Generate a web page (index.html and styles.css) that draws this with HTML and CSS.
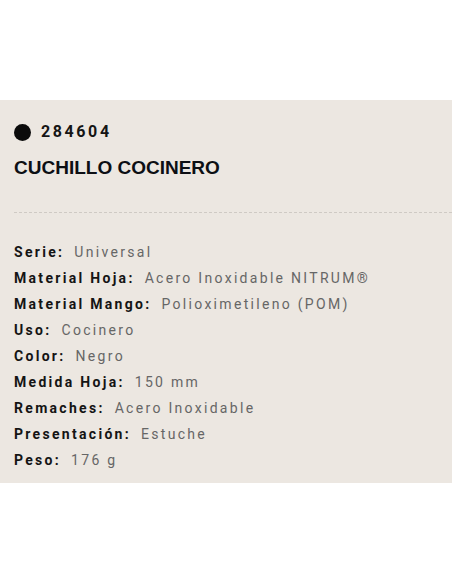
FILE: index.html
```html
<!DOCTYPE html>
<html lang="es">
<head>
<meta charset="utf-8">
<title>Cuchillo Cocinero</title>
<link rel="stylesheet" href="styles.css">
</head>
<body>
<section class="panel">
  <div class="ref"><span class="dot"></span><span class="code">284604</span></div>
  <h1 class="title">CUCHILLO COCINERO</h1>
  <hr class="sep">
  <ul class="specs">
    <li><b>Serie:</b><span>Universal</span></li>
    <li><b>Material Hoja:</b><span>Acero Inoxidable NITRUM®</span></li>
    <li><b>Material Mango:</b><span>Polioximetileno (POM)</span></li>
    <li><b>Uso:</b><span>Cocinero</span></li>
    <li><b>Color:</b><span>Negro</span></li>
    <li><b>Medida Hoja:</b><span>150 mm</span></li>
    <li><b>Remaches:</b><span>Acero Inoxidable</span></li>
    <li><b>Presentación:</b><span>Estuche</span></li>
    <li><b>Peso:</b><span>176 g</span></li>
  </ul>
</section>
</body>
</html>
```
FILE: styles.css
```css
html, body {
  margin: 0;
  padding: 0;
  background: #ffffff;
}
body {
  font-family: Roboto, "Liberation Sans", Arial, sans-serif;
  color: #111;
}
.panel {
  margin-top: 100px;
  height: 383px;
  box-sizing: border-box;
  background: #ece7e1;
  padding: 24px 0 0 14px;
}
.ref {
  display: flex;
  align-items: center;
  gap: 10px;
  height: 16px;
}
.dot {
  width: 17px;
  height: 17px;
  border-radius: 50%;
  background: #0b0b0b;
}
.code {
  font-size: 16px;
  font-weight: 700;
  letter-spacing: 2.6px;
  color: #151515;
  line-height: 16px;
}
.title {
  margin: 17px 0 0;
  font-family: "Liberation Sans", Arial, sans-serif;
  font-size: 19px;
  font-weight: 700;
  line-height: 22px;
  color: #0d0f14;
}
.sep {
  margin: 33px 0 0;
  border: 0;
  border-top: 1px dashed #cfcac4;
  height: 0;
}
.specs {
  list-style: none;
  margin: 26px 0 0;
  padding: 0;
}
.specs li {
  display: flex;
  gap: 10px;
  font-size: 14px;
  line-height: 26px;
  letter-spacing: 2.3px;
}
.specs b {
  font-weight: 700;
  color: #141414;
}
.specs span {
  color: #666666;
}
```
